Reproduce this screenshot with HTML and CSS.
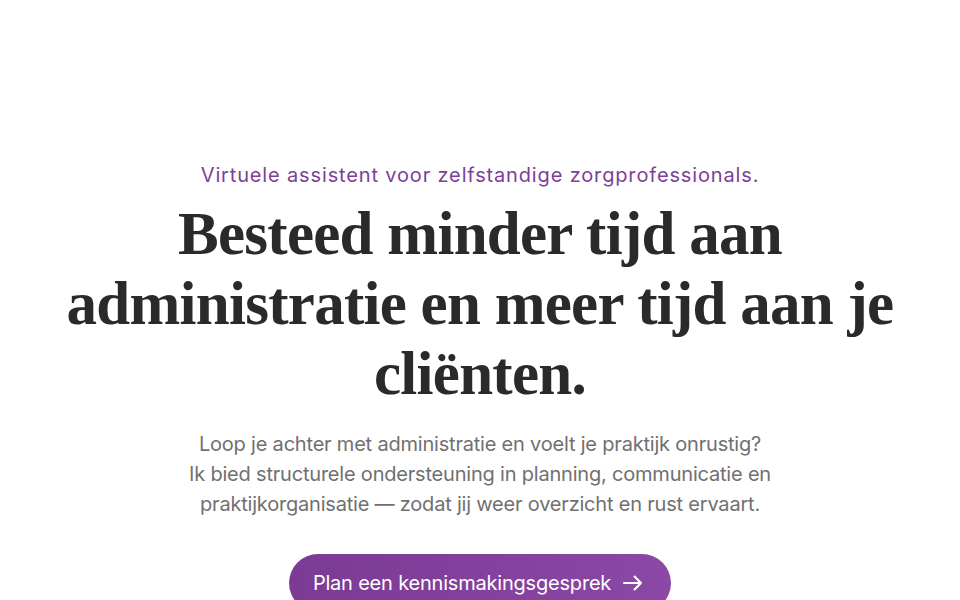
FILE: index.html
```html
<!DOCTYPE html>
<html lang="nl">
<head>
<meta charset="utf-8">
<title>Virtuele assistent</title>
<link rel="stylesheet" href="styles.css">
</head>
<body>
<main class="hero">
  <p class="eyebrow">Virtuele assistent voor zelfstandige zorgprofessionals.</p>
  <h1 class="title">Besteed minder tijd aan<br>administratie en meer tijd aan je<br>cliënten.</h1>
  <p class="lead">Loop je achter met administratie en voelt je praktijk onrustig?<br>Ik bied structurele ondersteuning in planning, communicatie en praktijkorganisatie — zodat jij weer overzicht en rust ervaart.</p>
  <a class="cta" href="#">Plan een kennismakingsgesprek
    <svg class="arrow" viewBox="0 0 24 24" width="24" height="24" aria-hidden="true"><path d="M3 12h17M13.5 5.5 20 12l-6.5 6.5" fill="none" stroke="currentColor" stroke-width="2" stroke-linecap="round" stroke-linejoin="round"/></svg>
  </a>
</main>
</body>
</html>
```
FILE: styles.css
```css
html, body {
  margin: 0;
  padding: 0;
  background: #ffffff;
}
body {
  font-family: "Inter", "Liberation Sans", sans-serif;
  overflow: hidden;
  height: 600px;
}
.hero {
  display: flex;
  flex-direction: column;
  align-items: center;
  text-align: center;
  padding-top: 161px;
}
.eyebrow {
  margin: 0;
  color: #7d3f98;
  font-size: 20px;
  line-height: 28px;
  letter-spacing: 0.85px;
}
.title {
  margin: 10px 0 0;
  font-family: "Liberation Serif", "DejaVu Serif", serif;
  font-weight: 700;
  font-size: 61px;
  line-height: 70px;
  letter-spacing: -0.012em;
  color: #2a2a2a;
}
.lead {
  margin: 20px 0 0;
  max-width: 600px;
  color: #707070;
  font-size: 20px;
  line-height: 30px;
  letter-spacing: -0.2px;
}
.cta {
  margin-top: 35px;
  display: inline-flex;
  align-items: center;
  gap: 10px;
  padding: 0 26px 0 24px;
  height: 58px;
  border-radius: 29px;
  background: linear-gradient(90deg, #7b3a94, #8b48a6);
  color: #ffffff;
  text-decoration: none;
  font-size: 20px;
  letter-spacing: -0.01em;
}
.arrow {
  display: block;
}
```
